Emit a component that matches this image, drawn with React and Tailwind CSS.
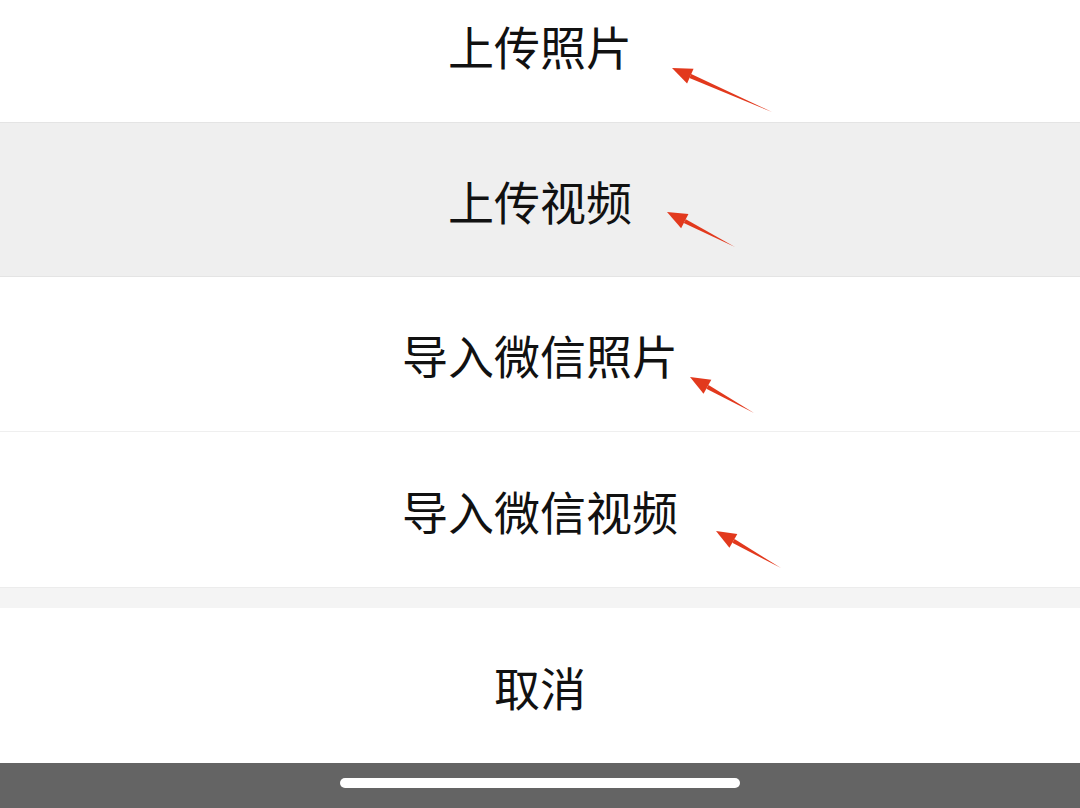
const rows = [
  { label: "上传照片", bg: "bg-white", h: "h-[155px] -mt-[33px]" },
  { label: "上传视频", bg: "bg-[#efefef] border-y border-[#e4e4e4]", h: "h-[155px]" },
  { label: "导入微信照片", bg: "bg-white border-b border-[#efefef]", h: "h-[155px]" },
  { label: "导入微信视频", bg: "bg-white", h: "h-[155px]" },
];

// red annotation arrows: head (tip) -> tail
const arrows = [
  { x1: 672, y1: 68, x2: 772, y2: 112 },
  { x1: 667, y1: 212, x2: 735, y2: 247 },
  { x1: 690, y1: 377, x2: 754, y2: 413 },
  { x1: 716, y1: 531, x2: 781, y2: 568 },
];

const Arrow = ({ x1, y1, x2, y2 }) => {
  const dx = x2 - x1;
  const dy = y2 - y1;
  const len = Math.hypot(dx, dy);
  const ux = dx / len;
  const uy = dy / len;
  const headLen = 20;
  const headW = 8;
  const bx = x1 + ux * headLen;
  const by = y1 + uy * headLen;
  const px = -uy;
  const py = ux;
  const head = `${x1},${y1} ${bx + px * headW},${by + py * headW} ${bx - px * headW},${by - py * headW}`;
  const shaft = `${bx + px * 2.2},${by + py * 2.2} ${x2},${y2} ${bx - px * 2.2},${by - py * 2.2}`;
  return (
    <g fill="#e2391d">
      <polygon points={head} />
      <polygon points={shaft} />
    </g>
  );
};

export default function App() {
  return (
    <div
      className="relative w-[1080px] h-[808px] overflow-hidden bg-white text-[#111]"
      style={{ fontFamily: '"Noto Sans CJK SC", "Noto Sans", sans-serif' }}
    >
      <div className="flex flex-col">
        {rows.map((r) => (
          <div
            key={r.label}
            className={`${r.h} ${r.bg} box-border flex items-center justify-center text-[46px] leading-none`}
          >
            {r.label}
          </div>
        ))}
        <div className="h-[21px] bg-[#f4f4f4] border-t border-[#ececec]" />
        <div className="h-[155px] bg-white flex items-center justify-center text-[46px] leading-none">
          取消
        </div>
        <div className="h-[45px] bg-[#646464] flex justify-center pt-[15px]">
          <div className="w-[400px] h-[10px] rounded-full bg-white" />
        </div>
      </div>

      <svg className="absolute inset-0 pointer-events-none" width="1080" height="808">
        {arrows.map((a, i) => (
          <Arrow key={i} {...a} />
        ))}
      </svg>
    </div>
  );
}
